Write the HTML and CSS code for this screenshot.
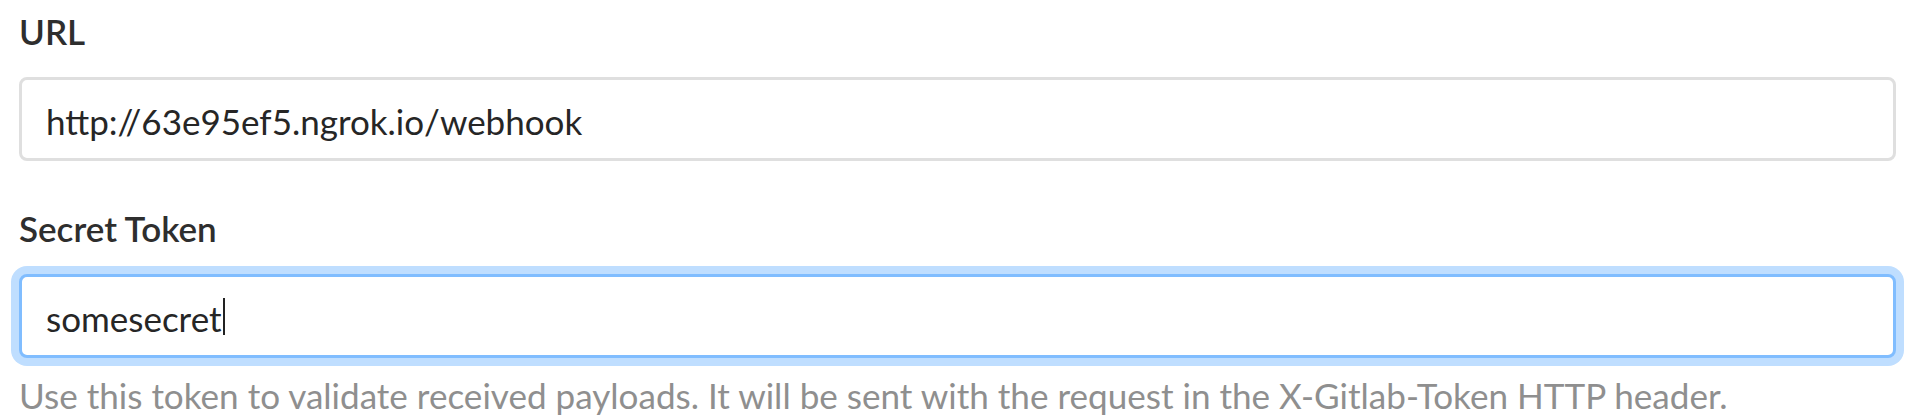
FILE: index.html
```html
<!DOCTYPE html>
<html lang="en">
<head>
<meta charset="utf-8">
<title>Webhook settings</title>
<link rel="stylesheet" href="styles.css">
</head>
<body>
<form class="webhook-form">
  <div class="form-group">
    <label class="form-label">URL</label>
    <div class="form-control" role="textbox">http://63e95ef5.ngrok.io/webhook</div>
  </div>
  <div class="form-group">
    <label class="form-label">Secret Token</label>
    <div class="form-control is-focused" role="textbox"><span class="value">somesecret</span><span class="caret"></span></div>
    <p class="form-text">Use this token to validate received payloads. It will be sent with the request in the X-Gitlab-Token HTTP header.</p>
  </div>
</form>
</body>
</html>
```
FILE: styles.css
```css
html, body {
  margin: 0;
  padding: 0;
  background: #ffffff;
}

.webhook-form {
  display: flex;
  flex-direction: column;
  gap: 46px;
  padding: 10px 19px 0 19px;
  font-family: "Lato", "Noto Sans", sans-serif;
  font-size: 35px;
  line-height: 42px;
  color: #2e2e2e;
}

.form-group {
  display: flex;
  flex-direction: column;
}

.form-label {
  display: block;
  font-weight: 600;
  color: #2e2e2e;
  margin-bottom: 25px;
}

.form-control {
  box-sizing: border-box;
  height: 84px;
  padding: 20px 24px 16px 24px;
  border: 3px solid #dfdfdf;
  border-radius: 8px;
  background: #ffffff;
  color: #262626;
  white-space: nowrap;
}

.form-control.is-focused {
  border-color: #80bdff;
  box-shadow: 0 0 0 8px #bfdeff;
}

.caret {
  display: inline-block;
  width: 2px;
  height: 37px;
  margin-left: 1px;
  background: #222222;
  vertical-align: -3px;
}

.form-text {
  margin: 16px 0 0 0;
  font-size: 35.1px;
  color: #8f8f8f;
  white-space: nowrap;
}
```
